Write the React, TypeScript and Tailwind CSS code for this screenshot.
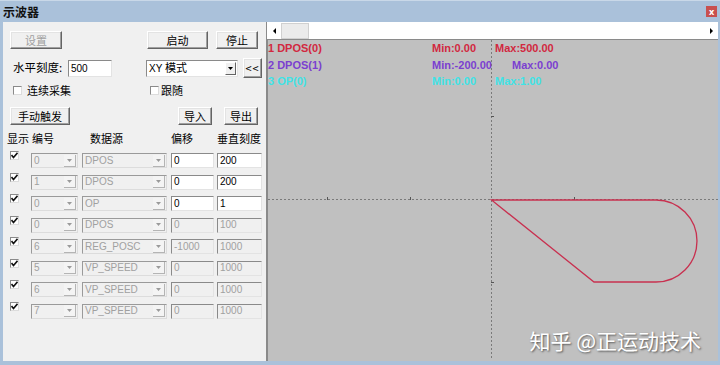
import { ReactNode } from "react";

const cjk = "font-['Noto_Sans_CJK_SC','Noto_Sans',sans-serif]";
const latin = "font-['Liberation_Sans','Noto_Sans_CJK_SC',sans-serif]";

function Btn({
  children,
  className,
  disabled,
}: {
  children: ReactNode;
  className: string;
  disabled?: boolean;
}) {
  return (
    <div
      className={`flex items-center justify-center bg-[#f0f0f0] border border-t-white border-l-white border-r-[#646464] border-b-[#646464] shadow-[inset_-1px_-1px_0_#a0a0a0,inset_1px_1px_0_#e3e3e3] text-[11px] leading-none ${cjk} ${
        disabled ? "text-[#a0a0a0]" : "text-black"
      } ${className}`}
    >
      {children}
    </div>
  );
}

function Check({ checked }: { checked?: boolean }) {
  return (
    <div className="w-[9px] h-[9px] bg-white border border-[#8a8a8a] border-r-[#dcdcdc] border-b-[#dcdcdc] flex items-center justify-center">
      {checked && (
        <svg width="7" height="7" viewBox="0 0 7 7">
          <path d="M0.5 3 L2.5 5.5 L6.5 0.8" stroke="#111" strokeWidth="1.6" fill="none" />
        </svg>
      )}
    </div>
  );
}

function Arrow({ color }: { color: string }) {
  return (
    <svg width="5" height="3" viewBox="0 0 5 3">
      <path d="M0 0 H5 L2.5 3 Z" fill={color} />
    </svg>
  );
}

function Combo({
  value,
  className,
}: {
  value: string;
  className: string;
}) {
  return (
    <div
      className={`h-[15px] flex items-center bg-[#f0f0f0] border border-t-[#9a9a9a] border-l-[#9a9a9a] border-r-[#dcdcdc] border-b-[#dcdcdc] ${className}`}
    >
      <span className={`flex-1 pl-[2px] text-[10px] leading-none text-[#a0a0a0] ${latin}`}>
        {value}
      </span>
      <div className="w-[12px] h-[12px] mr-[1px] flex items-center justify-center border-b border-r border-[#b4b4b4] bg-[#f4f4f4]">
        <Arrow color="#9a9a9a" />
      </div>
    </div>
  );
}

function Field({
  value,
  className,
  enabled,
}: {
  value: string;
  className: string;
  enabled?: boolean;
}) {
  return (
    <div
      className={`h-[15px] flex items-center pl-[2px] border border-t-[#8a8a8a] border-l-[#8a8a8a] border-r-[#e3e3e3] border-b-[#e3e3e3] text-[10px] leading-none ${latin} ${
        enabled ? "bg-white text-black" : "bg-[#f0f0f0] text-[#a0a0a0]"
      } ${className}`}
    >
      {value}
    </div>
  );
}

const rows = [
  { id: "0", src: "DPOS", off: "0", scale: "200", on: true },
  { id: "1", src: "DPOS", off: "0", scale: "200", on: true },
  { id: "0", src: "OP", off: "0", scale: "1", on: true },
  { id: "0", src: "DPOS", off: "0", scale: "100", on: false },
  { id: "6", src: "REG_POSC", off: "-1000", scale: "1000", on: false },
  { id: "5", src: "VP_SPEED", off: "0", scale: "1000", on: false },
  { id: "6", src: "VP_SPEED", off: "0", scale: "1000", on: false },
  { id: "7", src: "VP_SPEED", off: "0", scale: "1000", on: false },
];

function LeftPanel() {
  return (
    <div className={`w-[264px] h-full bg-[#f0f0f0] border-r border-[#8a8a8a] flex flex-col ${cjk}`}>
      <div className="flex mt-[9px]">
        <Btn disabled className="ml-[7px] w-[52px] h-[18px]">设置</Btn>
        <Btn className="ml-[85px] w-[61px] h-[18px]">启动</Btn>
        <Btn className="ml-[8px] w-[42px] h-[18px]">停止</Btn>
      </div>

      <div className="flex items-center mt-[9px] h-[20px]">
        <span className="ml-[10px] w-[55px] text-[11.5px] leading-none">水平刻度:</span>
        <div className={`w-[44px] h-[17px] flex items-center pl-[2px] bg-white border border-t-[#8a8a8a] border-l-[#8a8a8a] border-r-[#e3e3e3] border-b-[#e3e3e3] text-[10px] ${latin}`}>
          500
        </div>
        <div className="ml-[34px] w-[92px] h-[17px] flex items-center bg-white border border-t-[#8a8a8a] border-l-[#8a8a8a] border-r-[#e3e3e3] border-b-[#e3e3e3]">
          <span className="flex-1 pl-[2px] text-[11px] leading-none">
            <span className={`text-[10px] ${latin}`}>XY </span>模式
          </span>
          <div className="w-[11px] h-[13px] mr-[1px] flex items-center justify-center bg-[#f0f0f0] border border-t-white border-l-white border-r-[#646464] border-b-[#646464]">
            <Arrow color="#000" />
          </div>
        </div>
        <Btn className={`ml-[5px] w-[19px] h-[20px] text-[10px] tracking-[1px] ${latin}`}>&lt;&lt;</Btn>
      </div>

      <div className="flex items-center mt-[6px] h-[12px]">
        <div className="ml-[10px] w-[137px] flex items-center">
          <Check />
          <span className="ml-[5px] text-[11px] leading-none">连续采集</span>
        </div>
        <Check />
        <span className="ml-[2px] text-[11px] leading-none">跟随</span>
      </div>

      <div className="flex mt-[11px]">
        <Btn className="ml-[7px] w-[60px] h-[18px]">手动触发</Btn>
        <Btn className="ml-[108px] w-[34px] h-[18px]">导入</Btn>
        <Btn className="ml-[12px] w-[34px] h-[18px]">导出</Btn>
      </div>

      <div className="flex items-center mt-[6px] h-[14px] text-[11px] leading-none">
        <span className="ml-[4px] w-[25px]">显示</span>
        <span className="w-[58px]">编号</span>
        <span className="w-[81px]">数据源</span>
        <span className="w-[46px]">偏移</span>
        <span>垂直刻度</span>
      </div>

      <div className="flex flex-col gap-[6.5px] mt-[8px]">
        {rows.map((r, i) => (
          <div key={i} className="flex items-start h-[15px]">
            <div className="ml-[7px] -mt-[2px]">
              <Check checked />
            </div>
            <Combo value={r.id} className="ml-[12px] w-[47px]" />
            <Combo value={r.src} className="ml-[4px] w-[85px]" />
            <Field value={r.off} enabled={r.on} className="ml-[4px] w-[43px]" />
            <Field value={r.scale} enabled={r.on} className="ml-[3px] w-[45px]" />
          </div>
        ))}
      </div>
    </div>
  );
}

function ScrollBar() {
  return (
    <div className="h-[18px] bg-white flex items-center border-b border-[#8a8a8a]">
      <div className="w-[14px] h-full flex items-center justify-center">
        <svg width="3" height="6" viewBox="0 0 3 6">
          <path d="M3 0 V6 L0 3 Z" fill="#000" />
        </svg>
      </div>
      <div className="w-[28px] h-[16px] bg-[#ebebeb] border border-[#d0d0d0]" />
      <div className="flex-1" />
      <div className="w-[14px] h-full flex items-center justify-center">
        <svg width="3" height="6" viewBox="0 0 3 6">
          <path d="M0 0 V6 L3 3 Z" fill="#000" />
        </svg>
      </div>
    </div>
  );
}

function Plot() {
  return (
    <div className="relative flex-1 bg-[#c0c0c0] border-l border-[#8a8a8a] overflow-hidden">
      <svg className="absolute inset-0" width="450" height="320" viewBox="0 0 450 320">
        <line x1="0" y1="159.5" x2="450" y2="159.5" stroke="#7a7a7a" strokeDasharray="2 2" />
        <line x1="223.5" y1="0" x2="223.5" y2="320" stroke="#7a7a7a" strokeDasharray="2 2" />
        {[59, 142, 306].map((x) => (
          <line key={x} x1={x + 0.5} y1="157" x2={x + 0.5} y2="160" stroke="#555" />
        ))}
        {[76, 242].map((y) => (
          <line key={y} x1="223" y1={y + 0.5} x2="226" y2={y + 0.5} stroke="#555" />
        ))}
        <path
          d="M223.5 160 H388 A41 41 0 0 1 388 242 H326 Z"
          stroke="#c8304f"
          strokeWidth="1.3"
          fill="none"
        />
      </svg>

      <div className={`relative flex flex-col text-[11px] font-bold leading-[16.5px] ${latin}`}>
        <div className="flex text-[#d2283f]">
          <span className="w-[164px]">1 DPOS(0)</span>
          <span className="w-[63px]">Min:0.00</span>
          <span>Max:500.00</span>
        </div>
        <div className="flex text-[#7b3fd0]">
          <span className="w-[164px]">2 DPOS(1)</span>
          <span className="w-[80px]">Min:-200.00</span>
          <span>Max:0.00</span>
        </div>
        <div className="flex text-[#3fe3e6]">
          <span className="w-[164px]">3 OP(0)</span>
          <span className="w-[63px]">Min:0.00</span>
          <span>Max:1.00</span>
        </div>
      </div>

      <div
        className={`absolute right-[17px] bottom-[10px] text-[21px] leading-none text-white [text-shadow:1px_1px_2px_rgba(0,0,0,0.55)] ${cjk}`}
      >
        知乎 @正运动技术
      </div>
    </div>
  );
}

export default function App() {
  return (
    <div className="w-[720px] h-[365px] bg-[#aac1da] flex flex-col overflow-hidden">
      <div className="h-[22px] flex items-center justify-between border-t border-[#c9d8e8]">
        <span className={`ml-[3px] text-[12px] font-bold text-[#111] ${cjk}`}>示波器</span>
        <div className="mr-[3px] w-[11px] h-[11px] bg-[#c8504f] flex items-center justify-center text-white text-[9px] leading-none font-bold">
          x
        </div>
      </div>

      <div className="flex flex-1 pl-[3px] pr-[2px] pb-[4px] min-h-0">
        <LeftPanel />
        <div className="flex-1 flex flex-col">
          <ScrollBar />
          <Plot />
        </div>
      </div>
    </div>
  );
}
